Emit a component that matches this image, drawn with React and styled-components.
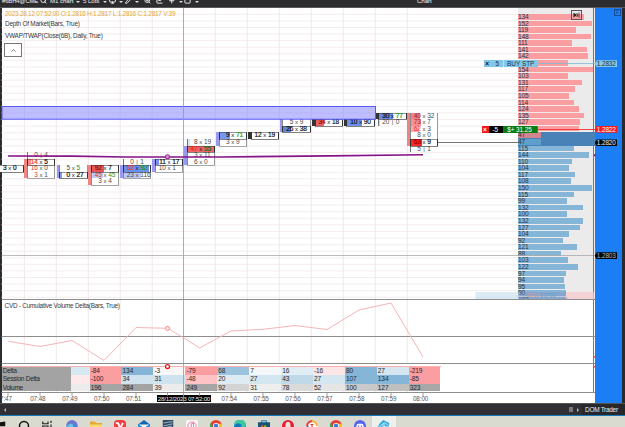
import React from "react";
import styled, { createGlobalStyle } from "styled-components";
import {
  Search, Monitor, Pencil, ZoomIn, ChartLine, Plus, Square, ChevronUp,
} from "lucide-react";

const ROW = 6.58;
const LADDER_TOP = 14;
const STAGE_TOP = 8;

const Global = createGlobalStyle`
  html, body { margin: 0; padding: 0; overflow: hidden; background: #fff; }
  * { box-sizing: border-box; }
`;

const Screen = styled.div`
  width: 625px;
  height: 427px;
  display: flex;
  flex-direction: column;
  overflow: hidden;
  font-family: "Liberation Sans", Arial, sans-serif;
  font-size: 6.6px;
  color: #333;
`;

/* ---------- title bar ---------- */
const TitleBar = styled.header`
  height: 8px;
  flex: none;
  display: flex;
  overflow: hidden;
  background: #2d2d30;
  color: #f0f0f0;
  border-bottom: 1px solid #58585a;
`;
const TitleSlot = styled.div`
  width: ${(p) => p.$w}px;
  height: 8px;
  flex: none;
  margin-top: -3px;
  line-height: 8px;
  white-space: nowrap;
  font-size: ${(p) => p.$size || 6.5}px;
  letter-spacing: -0.1px;
  svg { display: block; }
`;
const Caret = styled.span`
  width: 0;
  height: 0;
  display: block;
  margin: 4px 0 0 0.5px;
  border: 2.2px solid transparent;
  border-top-color: #dedede;
  border-bottom-width: 0;
`;

/* ---------- stage ---------- */
const Stage = styled.main`
  position: relative;
  height: 395px;
  flex: none;
  display: flex;
  background: #fff;
  overflow: hidden;
`;
const LeftEdge = styled.div`
  width: 1.5px;
  flex: none;
  background: #2d2d30;
`;
const ChartColumn = styled.section`
  width: 593px;
  flex: none;
  display: flex;
  flex-direction: column;
`;
const Layer = styled.svg`
  position: absolute;
  left: 0;
  top: 0;
  width: 625px;
  height: 395px;
  pointer-events: none;
`;
const PricePane = styled.div`
  height: 291.5px;
  flex: none;
  display: flex;
  justify-content: space-between;
  overflow: hidden;
`;
const Legend = styled.div`
  position: relative;
  width: 220px;
  padding: 2px 0 0 3.5px;
  display: flex;
  flex-direction: column;
  align-items: flex-start;
`;
const Quote = styled.div`
  height: 8px;
  line-height: 8px;
  white-space: nowrap;
  font-size: 6.4px;
  letter-spacing: -0.22px;
  color: #dfa63a;
`;
const StudyName = styled.div`
  height: 12.2px;
  line-height: 12.2px;
  white-space: nowrap;
  font-size: 6.4px;
  letter-spacing: ${(p) => p.$ls || -0.22}px;
  color: #383838;
`;
const CollapseButton = styled.button`
  width: 18px;
  height: 14px;
  margin: 1px 0 0 -1px;
  padding: 0;
  display: flex;
  align-items: center;
  justify-content: center;
  background: #fff;
  border: 1px solid #777;
  color: #444;
`;

/* ---------- depth ladder ---------- */
const Ladder = styled.div`
  position: relative;
  width: 76.5px;
  padding-top: 6px;
  background: #ebebeb;
`;
const LadderRow = styled.div`
  height: ${ROW}px;
  display: flex;
  align-items: stretch;
  border-bottom: 1px solid ${(p) => (p.$joined ? "transparent" : "#f1eaea")};
  background: ${(p) => (p.$joined ? "#4982b6" : "transparent")};
`;
const DepthBar = styled.div`
  width: ${(p) => p.$w}px;
  flex: none;
  background: ${(p) => p.$c};
  line-height: 6px;
  font-size: 6.6px;
  letter-spacing: -0.15px;
  color: #27323c;
  white-space: nowrap;
`;
const GoToEnd = styled.div`
  position: absolute;
  left: 53px;
  top: 2px;
  width: 11px;
  height: 9.5px;
  display: flex;
  align-items: center;
  justify-content: center;
  border: 1px solid #555;
`;

/* ---------- order tags ---------- */
const OrderTag = styled.div`
  position: absolute;
  left: ${(p) => p.$x}px;
  top: ${(p) => p.$y}px;
  height: 7px;
  display: flex;
  line-height: 7px;
  font-size: 6.4px;
  text-align: center;
`;
const TagPart = styled.span`
  width: ${(p) => p.$w}px;
  background: ${(p) => p.$bg};
  color: ${(p) => p.$fg};
  white-space: nowrap;
  font-weight: ${(p) => (p.$strong ? 700 : 400)};
  border-right: 0.6px solid ${(p) => p.$edge || "transparent"};
  letter-spacing: ${(p) => p.$ls || 0}px;
`;

/* ---------- footprint ---------- */
const Candle = styled.div`
  position: absolute;
  z-index: 0;
  left: ${(p) => p.$x}px;
  top: ${(p) => LADDER_TOP - STAGE_TOP + p.$row * ROW}px;
  width: 31px;
  padding-left: 2.5px;
`;
const Body = styled.i`
  position: absolute;
  left: 0;
  top: ${(p) => p.$skip * ROW}px;
  width: 2.6px;
  height: ${(p) => p.$rows * ROW}px;
  background: ${(p) => p.$c};
`;
const FootCell = styled.div`
  position: relative;
  width: 28.5px;
  height: ${ROW}px;
  display: grid;
  grid-template-columns: 1fr 6.6px 1fr;
  grid-template-rows: ${ROW}px;
  line-height: ${ROW}px;
  font-size: 6.5px;
  letter-spacing: -0.1px;
  white-space: nowrap;
  color: ${(p) => (p.$hot ? "#111" : "#484848")};
  z-index: ${(p) => (p.$hot ? 1 : 0)};
  box-shadow: ${(p) =>
    p.$hot
      ? "inset 1px 0 #333, inset -1px 0 #333, inset 0 0.6px #333, 0 0.6px #333"
      : p.$open
        ? "inset 1px 0 #777"
        : "inset 1px 0 #888, inset -1px 0 #999, 0 1px #a5a5a5"};
  background: linear-gradient(90deg, ${(p) => p.$fill || "#fff"} ${(p) => p.$part || 0}%, ${(p) => (p.$open ? "transparent" : "#fff")} ${(p) => p.$part || 0}%);
`;
const Side = styled.b`
  font-weight: 400;
  text-align: ${(p) => p.$to};
  color: ${(p) => p.$c || "inherit"};
  -webkit-text-stroke: ${(p) => (p.$hot ? 0.2 : 0)}px currentColor;
`;
const Times = styled.span`
  text-align: center;
  font-size: 6px;
`;

/* ---------- cumulative delta pane and table ---------- */
const DeltaPane = styled.div`
  position: relative;
  height: 67px;
  flex: none;
  padding: 0 0 0 3px;
`;
const DeltaTable = styled.div`
  height: 26px;
  flex: none;
  display: grid;
  grid-template-columns: 69px 19px repeat(11, 31.92px);
  grid-template-rows: 8.4px 8.8px 7px;
`;
const TableCell = styled.div`
  padding-left: 1.2px;
  line-height: 8.4px;
  font-size: 6.6px;
  letter-spacing: ${(p) => (p.$head ? -0.28 : -0.15)}px;
  color: #1d282f;
  background: ${(p) => p.$bg};
  white-space: nowrap;
  overflow: visible;
`;
const TimeAxis = styled.div`
  height: 10.5px;
  flex: none;
  display: flex;
  margin-left: -11.5px;
  padding-top: 2.5px;
`;
const TimeLabel = styled.div`
  width: 31.92px;
  height: 7px;
  flex: none;
  text-align: center;
  line-height: 7px;
  font-size: 6.3px;
  letter-spacing: -0.1px;
  color: #555;
`;
const TimeCursor = styled.div`
  width: 54.5px;
  height: 7px;
  margin: 0 2px 0 7.2px;
  flex: none;
  text-align: center;
  line-height: 7px;
  font-size: 6.2px;
  letter-spacing: -0.24px;
  white-space: nowrap;
  background: #000;
  color: #eee;
`;

/* ---------- price axis ---------- */
const PriceAxis = styled.aside`
  width: 27.5px;
  flex: none;
  background: #1b7ef5;
  display: flex;
  justify-content: flex-end;
`;
const FixedBadge = styled.span`
  width: 7px;
  height: 7px;
  margin: 1px 1px 0 0;
  border: 0.8px solid #174d92;
  color: #174d92;
  font-size: 5.5px;
  line-height: 5.5px;
  text-align: center;
`;
const RightEdge = styled.div`
  flex: 1;
  background: #2a2930;
`;
const PriceTag = styled.div`
  position: absolute;
  left: 594.5px;
  top: ${(p) => p.$y}px;
  width: 22.8px;
  height: 6.8px;
  padding-left: 2.3px;
  line-height: 7px;
  font-size: 6.4px;
  letter-spacing: -0.1px;
  background: ${(p) => p.$bg};
  color: ${(p) => p.$fg};
  clip-path: polygon(0 50%, 10% 0, 100% 0, 100% 100%, 10% 100%);
`;

/* ---------- status bar ---------- */
const StatusBar = styled.footer`
  height: 13px;
  flex: none;
  display: flex;
  align-items: center;
  justify-content: space-between;
  background: #303034;
  border-top: 0.7px solid #555;
  border-bottom: 1px solid #1579bd;
  color: #ececec;
`;
const ScrollArrow = styled.i`
  border: 2px solid transparent;
  border-${(p) => p.$side}-color: #bbb;
  margin-left: ${(p) => p.$gap}px;
`;
const DomTab = styled.div`
  display: flex;
  align-items: center;
  height: 12px;
`;
const Grip = styled.i`
  width: 4px;
  height: 5px;
  background: #77777b;
`;
const TabName = styled.span`
  width: 43.5px;
  height: 11px;
  line-height: 11px;
  margin-left: 1px;
  padding-left: 3.5px;
  background: #28282b;
  font-size: 6.5px;
  letter-spacing: -0.3px;
  white-space: nowrap;
`;

/* ---------- task bar ---------- */
const TaskBar = styled.nav`
  height: 11px;
  flex: none;
  display: flex;
  overflow: hidden;
  background: #dadbd0;
`;
const TaskRow = styled.div`
  display: flex;
  flex: none;
  margin-left: -12px;
`;
const TaskButton = styled.div`
  width: 24px;
  height: 15px;
  flex: none;
  padding-top: 4px;
  background: ${(p) => (p.$active ? "#eef0ee" : "transparent")};
  svg { display: block; margin: 0 auto; }
`;

const RED = "#fb9ea2";
const BLUE = "#86b6d7";
const depth = [
  [134], [152], [119], [148], [111], [141], [142], [103, ""], [153, "154"], [103], [131], [117], [105], [114],
  [124], [135], [127], [124, ""], [47], [47], [115], [144], [110], [104], [117], [108], [150], [115], [99],
  [132], [100], [132], [127], [104], [92], [121], [88], [103], [122], [97], [94], [95], [98, "90"], [103, "103"],
];

const UP = "#9a9af0";
const DOWN = "#ee8585";
const r = "#e33";
const g = "#1b9a2b";
/* cell: [bid, ask, fill, fill %, bid colour, ask colour, hot, open, separator] */
const candles = [
  { x: -7, row: 23, c: UP, cells: [["3", "0", "", 0, "", "", 1]] },
  { x: 24.3, row: 21, c: DOWN, skip: 1, cells: [["0", "4", "", 0, "", "", 0, 1, "|"], ["14", "5", "#ff8b88", 13, r, "", 1], ["16", "0", "", 0, r], ["3", "1", "", 0, r]] },
  { x: 56.5, row: 23, c: UP, cells: [["5", "5", "", 0, "", g], ["0", "27", "#809cec", 9, "", "", 1]] },
  { x: 88.3, row: 23, c: DOWN, cells: [["92", "7", "#e95858", 47, "#811", "", 1], ["45", "45", "#bec9f7", 42, r, g], ["3", "4"]] },
  { x: 120.3, row: 22, c: UP, skip: 1, cells: [["0", "1", "", 0, "", "", 0, 1, "|"], ["52", "92", "#6c90f0", 92, r, g, 1], ["23", "116", "#bdc8f7", 65]] },
  { x: 152.3, row: 22, c: UP, cells: [["11", "17", "#7a91ea", 13, "", "", 1], ["10", "1"]] },
  { x: 184, row: 19, c: UP, skip: 1, cells: [["8", "19", "#d1e7ee", 10, "", "", 0, 1, "x"], ["47", "55", "#ec6668", 100, "#f21", "#186b20", 1], ["3", "11"], ["6", "0"]] },
  { x: 216, row: 18, c: UP, cells: [["9", "71", "#7899f0", 38, "", g, 1], ["3", "9"]] },
  { x: 248, row: 18, c: "#333", cells: [["12", "19", "#b9b9bf", 5, "", "", 1]] },
  { x: 279.8, row: 16, c: UP, cells: [["5", "9"], ["26", "38", "#6387dc", 31, "", "", 1]] },
  { x: 312, row: 16, c: "#333", cells: [["34", "18", "#e96060", 31, "#811", "", 1]] },
  { x: 343.8, row: 16, c: "#333", cells: [["10", "90", "#6f91ed", 56, "", "", 1]] },
  { x: 375.8, row: 15, c: "#333", rows: 1, cells: [["30", "77", "#668bea", 52, "", g, 1], ["20", "0", "#f7c6c6", 6, "", "", 0, 1, "|"]] },
  { x: 407.3, row: 15, c: DOWN, rows: 5, cells: [["40", "32", "#f28084", 34, "#922"], ["73", "7", "#f88e92", 38, "#922"], ["62", "3", "#ffa4a6", 33, r], ["8", "0"], ["63", "9", "#f52a2a", 43, "#a00", "", 1], ["5", "1", "", 0, "", "", 0, 1, "|"]] },
];

const tableRows = [
  ["Delta", ["#a3a3a3", "#d6e8f2", RED, BLUE, "#fbf6f6", RED, "#9bc3de", "#f4f8fa", "#e1edf4", "#fbe5e5", BLUE, "#d5e6f0", RED], ["-84", "134", "-3", "-79", "68", "7", "16", "-16", "80", "27", "-219"]],
  ["Session Delta", ["#a3a3a3", "#fde8ec", RED, "#cfe2ee", "#cfe3ee", "#fdc3c5", "#dfebf3", "#d4e6f0", "#bfd9e9", "#d4e6f0", BLUE, BLUE, RED], ["-100", "34", "31", "-48", "20", "27", "43", "27", "107", "134", "-85"]],
  ["Volume", ["#a3a3a3", "#ececec", "#a5a5a5", "#a3a3a3", "#ececec", "#a5a5a5", "#d4d4d4", "#eeeeee", "#dadada", "#e5e5e5", "#c9c9c9", "#bfbfbf", "#a7a7a7"], ["196", "284", "39", "249", "92", "31", "78", "52", "100", "127", "323"]],
];

const titleItems = [
  [37.5, "#6BH4@CME", 5.9], [10.5, Search, 7], [25, "M1 chart", 6.2], [8, "caret"], [19, "5 Lots", 6.2], [7, "caret"],
  [9, Monitor, 7], [7, "caret"], [9, Pencil, 7], [10, "caret"], [12, ZoomIn, 7], [12, ChartLine, 7], [10, Plus, 7.5], [6, "caret"],
  [10, Square, 7], [6, "caret"],
];

function TitleItem({ item: [w, what, size] }) {
  if (what === "caret") return <TitleSlot $w={w}><Caret /></TitleSlot>;
  if (typeof what === "string") return <TitleSlot $w={w} $size={size}>{what}</TitleSlot>;
  const Icon = what;
  return <TitleSlot $w={w}><Icon size={size} strokeWidth={3.2} /></TitleSlot>;
}

function Footprint({ data }) {
  return (
    <Candle $x={data.x} $row={data.row}>
      <Body $c={data.c} $skip={data.skip || 0} $rows={data.rows || data.cells.length - (data.skip || 0)} />
      {data.cells.map(([bid, ask, fill, part, bc, ac, hot, open, sep], i) => (
        <FootCell key={i} $fill={fill} $part={part} $hot={hot} $open={open}>
          <Side $to="right" $c={bc} $hot={hot}>{bid}</Side>
          <Times>{sep || "x"}</Times>
          <Side $to="left" $c={ac} $hot={hot}>{ask}</Side>
        </FootCell>
      ))}
    </Candle>
  );
}

const gridX = [24.4, 56.3, 88.3, 120.2, 152.2, 215.3, 247.3, 279.3, 311.3, 343.3, 375.3, 407.3];
const ticksX = [8, 40, 72, 104, 136, 167.5, 199.5, 231, 263, 295, 327, 359, 391, 423];

function BackLayer() {
  return (
    <Layer viewBox="0 8 625 395">
      {Array.from({ length: 44 }, (_, i) => (
        <path key={i} d={`M1.5 ${LADDER_TOP + i * ROW + 0.3}H518`} stroke="#f3ebec" strokeWidth="0.9" />
      ))}
      {gridX.map((x) => (
        <path key={x} d={`M${x} 8V363M${x} 391V392`} stroke="#efe8e9" strokeWidth="1" />
      ))}
    </Layer>
  );
}

function FrontLayer() {
  return (
    <Layer viewBox="0 8 625 395">
      <rect x="2" y="106.5" width="373.5" height="12.7" fill="#8585ff" fillOpacity="0.54" stroke="#5959f5" strokeWidth="1" />
      <path d="M183.5 8V403" stroke="#999" strokeWidth="0.8" />
      <path d="M1.5 255.5H595" stroke="#aaa" strokeWidth="0.8" />
      <path d="M438 142.5H518M593.5 8V393" stroke="#777" strokeWidth="1" />
      <path d="M537 63.5H596" stroke="#7fb9d8" strokeWidth="0.8" />
      <path d="M537 129.5H596" stroke="#e33" strokeWidth="0.9" />
      <rect x="475.5" y="292" width="44" height="7" fill="#c7dfec" fillOpacity="0.65" />
      <rect x="518" y="292" width="48" height="7" fill="#8790b8" fillOpacity="0.4" />
      <rect x="566" y="292" width="28" height="7" fill="#f8c6ca" fillOpacity="0.7" />
      <text x="527" y="296.8" fontSize="5" fill="#e08f8f">00:12</text>
      <text x="540" y="296.8" fontSize="5" fill="#5fa6cb">1.2796</text>
      <path d="M1.5 299.5H595M1.5 336.5H595M1.5 363.5H595M1.5 392.5H595" stroke="#8e8e8e" strokeWidth="1" />
      <path d="M1.5 366.5H441" stroke="#ff9999" strokeWidth="0.8" />
      <polyline
        points="8.3,341.3 40,346.5 72,340.5 104,360.5 136,327.5 167.5,328.3 185,338.5 199.5,348 231,331 263,329.3 295,325.5 327,329.5 359,310 391,303 423,357"
        fill="none" stroke="#f6b4b6" strokeWidth="1"
      />
      <path d="M8 156L72 156.1L125 157H220L330 155.9L423 154.8" fill="none" stroke="#851287" strokeWidth="1.6" />
      <circle cx="167.5" cy="156.7" r="2" fill="#d49ed5" stroke="#992b9a" strokeWidth="1.1" />
      <circle cx="167.5" cy="328.3" r="2" fill="#fde8e8" stroke="#f08b8b" strokeWidth="1" />
      <circle cx="167.5" cy="366.6" r="2" fill="#fff" stroke="#f01616" strokeWidth="1.3" />
      <path d="M594 155.3h1.5" stroke="#851287" strokeWidth="2" />
      <path d="M594 357h1.5M594 366.8h1.5" stroke="#f33" strokeWidth="1.6" />
      {ticksX.map((x) => <path key={x} d={`M${x} 393V396`} stroke="#888" strokeWidth="0.8" />)}
    </Layer>
  );
}

const taskIcons = {
  windows: <path d="M0 4L7 3V8H0ZM8 3L15 2V8H8ZM0 9H7V15L0 14ZM8 9H15V16L8 15Z" fill="#111" />,
  search: <circle cx="8" cy="8" r="6" fill="none" stroke="#111" strokeWidth="2" />,
  view: <path d="M1 2V5H8V2M1 14V8H8V14M12 1V4M12 6V15" fill="none" stroke="#222" strokeWidth="1.6" />,
  copilot: <g><circle cx="8" cy="8" r="7.5" fill="#368bd9" /><path d="M1 9Q0 0 9 0Q16 2 15 9L9 5Z" fill="#6d78cf" /><path d="M1 9Q6 2 10 7L7 14Z" fill="#65c7e9" /></g>,
  folder: <g><path d="M0 2H6L8 4H16V15H0Z" fill="#e6a834" /><path d="M0 6H16V15H0Z" fill="#fbd76b" /></g>,
  vivaldi: <g><rect width="16" height="16" rx="5" fill="#ee3f43" /><path d="M3 5Q4 3 6 5L8 11L12 4" fill="none" stroke="#fff" strokeWidth="2.4" /></g>,
  mail: <g><path d="M0 6L8 0L16 6V15H0Z" fill="#1266b4" /><path d="M1 6H15L8 11Z" fill="#e9f4fb" /><path d="M0 6L8 12L16 6V16H0Z" fill="#279fe3" /></g>,
  photo: <g><path d="M1 0H15V16H1Z" fill="#324a60" /><path d="M2 4L14 2M2 8L14 5M2 11L13 8" stroke="#8eb0c7" strokeWidth="1.4" /></g>,
  music: <g><rect width="16" height="16" rx="2" fill="#faf8fa" /><circle cx="8" cy="8" r="5.5" fill="none" stroke="#e46b86" strokeWidth="1.1" /><path d="M7 11V5L10 4V9" fill="none" stroke="#d3598c" strokeWidth="1" /></g>,
  chrome: <g><circle cx="8" cy="8" r="8" fill="#e63d31" /><path d="M1 4L6 12L8 16A8 8 0 0 1 1 4Z" fill="#34a753" /><path d="M8 5H15.5A8 8 0 0 1 8 16L11 9Z" fill="#fbc116" /><circle cx="8" cy="8" r="4" fill="#fff" /><circle cx="8" cy="8" r="3" fill="#3678e0" /></g>,
  edge: <g><circle cx="8" cy="8" r="8" fill="#168bd0" /><path d="M0 8A8 8 0 0 1 16 6Q15 11 10 10Q12 4 6 5Q2 6 0 8Z" fill="#40c9a0" /><path d="M0 8Q4 2 9 6L6 13Z" fill="#1677bf" /></g>,
  store: <g><path d="M5 4V1H11V4" fill="none" stroke="#1887b8" strokeWidth="1.6" /><path d="M0 3H16V16H0Z" fill="#155379" /><path d="M4 7H7V10H4Z" fill="#f25022" /><path d="M8 7H11V10H8Z" fill="#7fba00" /></g>,
  opera: <g><circle cx="8" cy="8" r="8" fill="#e81c35" /><ellipse cx="8" cy="8" rx="3.4" ry="5.6" fill="#e9e3da" /></g>,
  yandex: <g><circle cx="8" cy="8" r="8" fill="#fff" /><path d="M0 8A8 8 0 0 1 8 0L8 3A5 5 0 0 0 3 8Z" fill="#e8423a" /><path d="M8 0A8 8 0 0 1 16 8H13A5 5 0 0 0 8 3Z" fill="#f6b23f" /><path d="M0 8H3L8 13V16Z" fill="#3d7ee5" /><path d="M6 6H10M8 6V12" stroke="#dd3734" strokeWidth="1.5" /></g>,
  discord: <g><circle cx="8" cy="8" r="8" fill="#5865e8" /><path d="M3 10Q3 5 6 5H10Q13 5 13 10Z" fill="#fff" /><circle cx="6.2" cy="8" r="1" fill="#5865e8" /><circle cx="9.8" cy="8" r="1" fill="#5865e8" /></g>,
  atas: <g><path d="M2 5L7 0L15 4L13 13L5 15L0 9Z" fill="#2babdf" /><path d="M2 9L8 4V12M5 9H13M9 3L13 7" fill="none" stroke="#eefaff" strokeWidth="1.2" /></g>,
};
const taskOrder = ["windows", "search", "view", "copilot", "folder", "vivaldi", "mail", "photo", "music", "chrome", "edge", "store", "opera", "yandex", "chrome", "discord", "atas"];

export default function App() {
  return (
    <Screen>
      <Global />
      <TitleBar>
        <TitleSlot $w={2} />
        {titleItems.map((item, i) => <TitleItem key={i} item={item} />)}
        <TitleSlot $w={217} />
        <TitleSlot $w={30} $size={6.2}>Chart</TitleSlot>
      </TitleBar>

      <Stage>
        <BackLayer />
        <LeftEdge />
        <ChartColumn>
          <PricePane>
            <Legend>
              <Quote>2023.28.12 07:52:00 O:1.2816 H:1.2817 L:1.2816 C:1.2817 V:39</Quote>
              <StudyName>Depth Of Market(Bars, True)</StudyName>
              <StudyName>VWAP/TWAP(Close(6B), Daily, True)</StudyName>
              <CollapseButton><ChevronUp size={7} strokeWidth={2.5} /></CollapseButton>
            </Legend>
            <Ladder>
              {depth.map(([v, label], i) => (
                <LadderRow key={i} $joined={i === 18 || i === 19}>
                  <DepthBar $w={v * 0.49} $c={i === 18 ? "#d0858f" : i === 19 ? "#5f9fcd" : i < 18 ? RED : BLUE}>
                    {label ?? v}
                  </DepthBar>
                </LadderRow>
              ))}
              <GoToEnd>
                <svg width="7" height="6" viewBox="0 0 7 6">
                  <path d="M0.5 0.5L4 3L0.5 5.5Z" fill="#222" />
                  <path d="M3.5 1L5 3L3.5 5M6 0.3V5.7" fill="none" stroke="#222" strokeWidth="0.8" />
                </svg>
              </GoToEnd>
            </Ladder>
          </PricePane>
          <DeltaPane>
            <StudyName $ls={-0.23}>CVD - Cumulative Volume Delta(Bars, True)</StudyName>
          </DeltaPane>
          <DeltaTable>
            {tableRows.map(([name, colors, values]) =>
              colors.map((bg, i) => (
                <TableCell key={name + i} $bg={bg} $head={i === 0}>{i === 0 ? name : i === 1 ? "" : values[i - 2]}</TableCell>
              ))
            )}
          </DeltaTable>
          <TimeAxis>
            {["7:47", "07:48", "07:49", "07:50", "07:51"].map((t) => <TimeLabel key={t}>{t}</TimeLabel>)}
            <TimeCursor>28/12/2023 07:52:00</TimeCursor>
            {["07:54", "07:55", "07:56", "07:57", "07:58", "07:59", "08:00"].map((t) => <TimeLabel key={t}>{t}</TimeLabel>)}
          </TimeAxis>
        </ChartColumn>
        <PriceAxis><FixedBadge>F</FixedBadge></PriceAxis>
        <RightEdge />

        {candles.map((c) => <Footprint key={c.x} data={c} />)}
        <FrontLayer />

        <OrderTag $x={483.8} $y={52.2}>
          <TagPart $w={7.7} $bg="#82c6e8" $fg="#111" $strong>×</TagPart>
          <TagPart $w={12.5} $bg="#82c6e8" $fg="#234" $edge="#b5def0">5</TagPart>
          <TagPart $w={34.5} $bg="#82c6e8" $fg="#234">BUY STP</TagPart>
        </OrderTag>
        <OrderTag $x={481.5} $y={117.8}>
          <TagPart $w={7.5} $bg="#f21b1b" $fg="#fff" $strong>×</TagPart>
          <TagPart $w={13.5} $bg="#050505" $fg="#fff">-5</TagPart>
          <TagPart $w={35} $bg="#087d12" $fg="#fff" $ls={-0.1} $edge="#d33">$+ 31.25</TagPart>
        </OrderTag>
        <PriceTag $y={52.3} $bg="#86c8e8" $fg="#234">1.2832</PriceTag>
        <PriceTag $y={117.9} $bg="#f81c1c" $fg="#fff">1.2822</PriceTag>
        <PriceTag $y={131.4} $bg="#050505" $fg="#eee">1.2820</PriceTag>
        <PriceTag $y={244.3} $bg="#050505" $fg="#bbb">1.2803</PriceTag>
      </Stage>

      <StatusBar>
        <ScrollArrow $side="right" $gap={1.5} />
        <DomTab>
          <Grip />
          <ScrollArrow $side="left" $gap={4} />
          <TabName>DOM Trader</TabName>
        </DomTab>
      </StatusBar>

      <TaskBar>
        <TaskRow>
          {taskOrder.map((name, i) => (
            <TaskButton key={i} $active={name === "atas"}>
              <svg width="12" height="12" viewBox="0 0 16 16">{taskIcons[name]}</svg>
            </TaskButton>
          ))}
        </TaskRow>
      </TaskBar>
    </Screen>
  );
}
